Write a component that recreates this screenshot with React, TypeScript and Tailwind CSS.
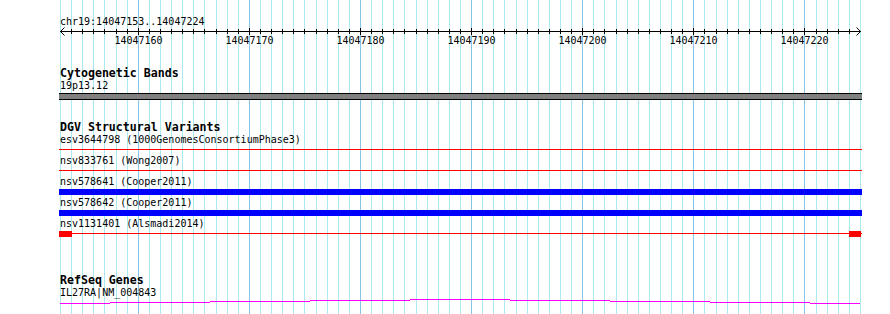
const START = 14047153;
const BASES = 72;
const xOf = (i: number) => Math.round(60 + (i * 800) / BASES);

type Variant = { name: string; kind: 'line' | 'bar' | 'ends' };

const variants: Variant[] = [
  { name: 'esv3644798 (1000GenomesConsortiumPhase3)', kind: 'line' },
  { name: 'nsv833761 (Wong2007)', kind: 'line' },
  { name: 'nsv578641 (Cooper2011)', kind: 'bar' },
  { name: 'nsv578642 (Cooper2011)', kind: 'bar' },
  { name: 'nsv1131401 (Alsmadi2014)', kind: 'ends' },
];

// stepped gene coverage line: [x1, x2, y]
const geneSteps: [number, number, number][] = [
  [60, 110, 4],
  [110, 210, 3],
  [210, 310, 2],
  [310, 410, 1],
  [410, 510, 0],
  [510, 610, 1],
  [610, 710, 2],
  [710, 810, 3],
  [810, 860, 4],
];

function GridLines() {
  const lines = [];
  for (let i = 0; i <= BASES; i++) {
    const major = (START + i) % 10 === 0;
    lines.push(
      <rect key={i} x={xOf(i)} y={0} width={1} height={314} fill={major ? '#86c4ea' : '#a9e9ef'} />
    );
  }
  return (
    <svg className="absolute inset-0" width={890} height={314} shapeRendering="crispEdges">
      {lines}
    </svg>
  );
}

function Ruler() {
  const ticks = [];
  const labels = [];
  for (let i = 1; i < BASES; i++) {
    const base = START + i;
    const major = base % 10 === 0;
    ticks.push(
      <rect key={i} x={xOf(i)} y={major ? 0 : 1} width={1} height={major ? 7 : 5} fill="#000" />
    );
    if (major) {
      labels.push(
        <text
          key={i}
          x={xOf(i) + 0.5}
          y={16}
          textAnchor="middle"
          fontFamily="DejaVu Sans Mono, monospace"
          fontSize={10}
          fill="#000"
        >
          {base}
        </text>
      );
    }
  }
  return (
    <svg className="block overflow-visible" width={890} height={22}>
      <g shapeRendering="crispEdges">
        <rect x={60} y={3} width={801} height={1} fill="#000" />
        {ticks}
      </g>
      <polyline points="64.5,-0.5 60.5,3.5 64.5,7.5" fill="none" stroke="#000" strokeWidth={1} />
      <polyline points="856.5,-0.5 860.5,3.5 856.5,7.5" fill="none" stroke="#000" strokeWidth={1} />
      {labels}
    </svg>
  );
}

function TrackTitle({ children, className }: { children: string; className: string }) {
  return (
    <div className={`pl-[60px] h-[12px] text-[11.6px] leading-[12px] font-bold whitespace-nowrap ${className}`}>
      {children}
    </div>
  );
}

function Label({ children }: { children: string }) {
  return <div className="pl-[60px] h-[13px] text-[10px] leading-[13px] whitespace-nowrap">{children}</div>;
}

function VariantRow({ v }: { v: Variant }) {
  return (
    <div className="flex flex-col h-[21px]">
      <Label>{v.name}</Label>
      <svg className="block" width={890} height={8} shapeRendering="crispEdges">
        {v.kind === 'bar' ? (
          <rect x={59} y={1} width={803} height={6} fill="#0000ff" />
        ) : (
          <rect x={59} y={3} width={803} height={1} fill="#ff0000" />
        )}
        {v.kind === 'ends' && (
          <>
            <rect x={59} y={1} width={13} height={6} fill="#ff0000" />
            <rect x={849} y={1} width={12} height={6} fill="#ff0000" />
          </>
        )}
      </svg>
    </div>
  );
}

export default function App() {
  return (
    <div className="relative w-[890px] h-[314px] overflow-hidden bg-white text-black font-['DejaVu_Sans_Mono',monospace]">
      <GridLines />
      <div className="relative flex flex-col pt-[15px]">
        <Label>chr19:14047153..14047224</Label>
        <Ruler />

        <TrackTitle className="mt-[17px]">Cytogenetic Bands</TrackTitle>
        <Label>19p13.12</Label>
        <div className="mt-px ml-[59px] w-[803px] h-[7px] border-y border-black bg-[#808080]" />

        <TrackTitle className="mt-[21px]">DGV Structural Variants</TrackTitle>
        {variants.map((v) => (
          <VariantRow key={v.name} v={v} />
        ))}

        <TrackTitle className="mt-[36px]">RefSeq Genes</TrackTitle>
        <Label>IL27RA|NM_004843</Label>
        <svg className="block" width={890} height={8} shapeRendering="crispEdges">
          {geneSteps.map(([x1, x2, y]) => (
            <rect key={x1} x={x1} y={y} width={x2 - x1} height={1} fill="#ff00ff" />
          ))}
        </svg>
      </div>
    </div>
  );
}
